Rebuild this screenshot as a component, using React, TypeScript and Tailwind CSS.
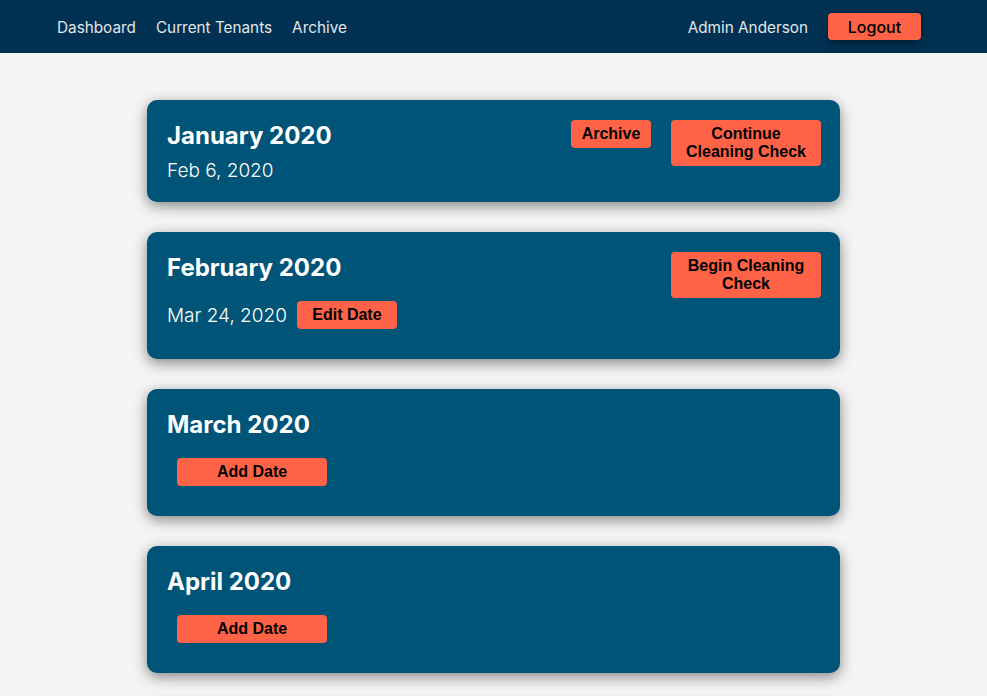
import React from "react";

type Month = {
  title: string;
  date?: string;
  archive?: boolean;
  action?: string;
};

const months: Month[] = [
  { title: "January 2020", date: "Feb 6, 2020", archive: true, action: "Continue Cleaning Check" },
  { title: "February 2020", date: "Mar 24, 2020", action: "Begin Cleaning Check" },
  { title: "March 2020" },
  { title: "April 2020" },
  { title: "May 2020" },
];

const btn =
  "bg-[#ff6347] text-black font-bold text-[16px] leading-[18px] rounded-[4px] py-[5px] font-['Liberation_Sans',Arial,sans-serif]";

const Card = ({ m }: { m: Month }) => {
  return (
    <div className="bg-[#005478] rounded-[10px] shadow-[0_4px_14px_rgba(0,0,0,0.45)] pl-5 pr-[19px] py-5 flex justify-between">
      <div className="flex flex-col">
        <h2 className="text-white font-bold text-[24px] leading-[32px] mb-[7px]">{m.title}</h2>
        {m.date ? (
          <div className="flex items-center">
            <span className="text-white text-[19px] leading-[23px] font-light">{m.date}</span>
            {!m.archive && (
              <button className={`${btn} w-[100px] mx-[10px] my-[10px]`}>Edit Date</button>
            )}
          </div>
        ) : (
          <div className="flex">
            <button className={`${btn} w-[150px] m-[10px]`}>Add Date</button>
          </div>
        )}
      </div>
      <div className="flex items-start gap-5">
        {m.archive && <button className={`${btn} w-[80px]`}>Archive</button>}
        {m.action && <button className={`${btn} w-[150px] px-[10px]`}>{m.action}</button>}
      </div>
    </div>
  );
};

export default function App() {
  return (
    <div className="min-h-screen bg-[#f4f4f4] font-['Inter',sans-serif]">
      <nav className="bg-[#003152] h-[53px] flex items-center justify-between pl-[57px] pr-[66px]">
        <ul className="flex items-center gap-5 pt-1 text-[15.3px] text-[#e2e6ea]">
          <li>
            <a href="#">Dashboard</a>
          </li>
          <li>
            <a href="#">Current Tenants</a>
          </li>
          <li>
            <a href="#">Archive</a>
          </li>
        </ul>
        <div className="flex items-center gap-5">
          <span className="pt-1 text-[15.3px] text-[#e2e6ea]">Admin Anderson</span>
          <button className="bg-[#ff6347] text-black font-medium text-[16px] w-[93px] h-[27px] rounded-[4px] shadow-[0_2px_8px_rgba(0,0,0,0.45)]">
            Logout
          </button>
        </div>
      </nav>
      <div className="w-[693px] mx-auto pt-[47px] pb-10 flex flex-col gap-[30px]">
        {months.map((m) => (
          <Card key={m.title} m={m} />
        ))}
      </div>
    </div>
  );
}
